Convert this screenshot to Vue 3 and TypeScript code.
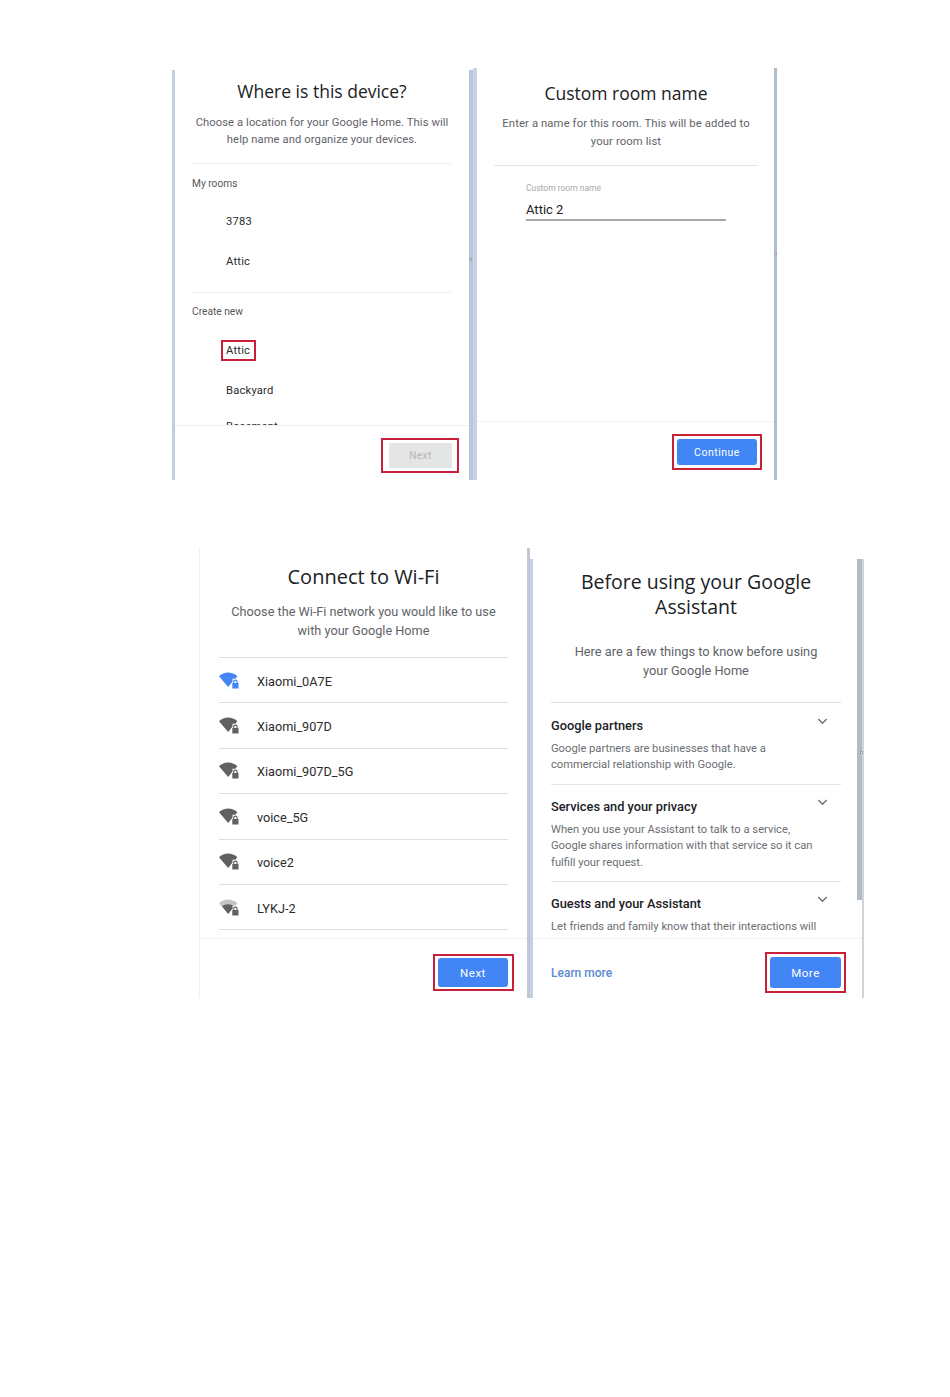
<template>
  <div class="page">
    <!-- first pair: room selection -->
    <div class="row row-rooms">
      <section class="panel panel-where">
        <header class="head">
          <h1>Where is this device?</h1>
          <p>Choose a location for your Google Home. This will<br />help name and organize your devices.</p>
        </header>
        <div class="body rooms">
          <div class="room-label">My rooms</div>
          <div v-for="r in myRooms" :key="r" class="room">{{ r }}</div>
          <div class="room-divider"></div>
          <div class="room-label second">Create new</div>
          <div v-for="r in newRooms" :key="r" class="room">
            <span :class="{ marked: r === 'Attic' }">{{ r }}</span>
          </div>
        </div>
        <footer class="foot">
          <div class="frame"><button type="button" class="btn off">Next</button></div>
        </footer>
        <i class="handle"></i>
      </section>

      <section class="panel panel-custom">
        <header class="head">
          <h1>Custom room name</h1>
          <p>Enter a name for this room. This will be added to<br />your room list</p>
        </header>
        <div class="body field-wrap">
          <label class="field-label">Custom room name</label>
          <div class="field-value">Attic 2</div>
        </div>
        <footer class="foot">
          <div class="frame"><button type="button" class="btn">Continue</button></div>
        </footer>
        <i class="handle"></i>
      </section>
    </div>

    <!-- second pair: wifi and assistant -->
    <div class="row row-setup">
      <section class="panel panel-wifi">
        <header class="head">
          <h1>Connect to Wi-Fi</h1>
          <p>Choose the Wi-Fi network you would like to use<br />with your Google Home</p>
        </header>
        <ul class="body networks">
          <li v-for="n in networks" :key="n.name" class="network">
            <svg class="wifi" viewBox="0 0 20 17" width="20" height="17">
              <path :fill="n.weak ? '#c4c4c4' : n.color" d="M0 4.2C2.6 1.8 6 .6 9.2.6s6.600 1.200 9.200 3.600L16.300 6.800H13.500V9.500L9.200 15z" />
              <path v-if="n.weak" :fill="n.color" d="M3 7.200C4.700 5.900 6.900 5.200 9.200 5.200c1.600 0 3 .3 4.300 1V9.500L9.200 15z" />
              <path :fill="n.color" d="M13.300 11h.8V9.800a2.300 2.300 0 0 1 4.600 0V11h.8v5.600h-6.200zM15.300 11h2.200V9.800a1.100 1.100 0 0 0-2.200 0z" />
            </svg>
            <span>{{ n.name }}</span>
          </li>
        </ul>
        <footer class="foot">
          <div class="frame"><button type="button" class="btn">Next</button></div>
        </footer>
      </section>

      <section class="panel panel-assistant">
        <header class="head">
          <h1>Before using your Google<br />Assistant</h1>
          <p>Here are a few things to know before using<br />your Google Home</p>
        </header>
        <div class="body topics">
          <article v-for="t in topics" :key="t.title" class="topic">
            <div class="topic-head">
              <h2>{{ t.title }}</h2>
              <svg class="chev" viewBox="0 0 12 8" width="11" height="7">
                <path d="M1.200 1.200 6 6l4.800-4.800" fill="none" stroke="#6f6f6f" stroke-width="1.600" />
              </svg>
            </div>
            <p v-html="t.text"></p>
          </article>
        </div>
        <footer class="foot">
          <a class="learn">Learn more</a>
          <div class="frame"><button type="button" class="btn">More</button></div>
        </footer>
        <i class="scrollbar"></i>
        <i class="handle"></i>
      </section>
    </div>
  </div>
</template>

<script setup lang="ts">
interface Network {
  name: string
  color: string
  weak?: boolean
}

const myRooms = ['3783', 'Attic']
const newRooms = ['Attic', 'Backyard', 'Basement']

const networks: Network[] = [
  { name: 'Xiaomi_0A7E', color: '#4285f4' },
  { name: 'Xiaomi_907D', color: '#616161' },
  { name: 'Xiaomi_907D_5G', color: '#616161' },
  { name: 'voice_5G', color: '#616161' },
  { name: 'voice2', color: '#616161' },
  { name: 'LYKJ-2', color: '#616161', weak: true }
]

const topics = [
  {
    title: 'Google partners',
    text: 'Google partners are businesses that have a<br>commercial relationship with Google.'
  },
  {
    title: 'Services and your privacy',
    text: 'When you use your Assistant to talk to a service,<br>Google shares information with that service so it can<br>fulfill your request.'
  },
  {
    title: 'Guests and your Assistant',
    text: 'Let friends and family know that their interactions will<br>be saved to your Google Account and used to help the'
  }
]
</script>

<style>
html, body { background: #fff; }
</style>

<style scoped>
.page {
  height: 1397px;
  padding-top: 68px;
  box-sizing: border-box;
  font-family: Roboto, "Liberation Sans", sans-serif;
  color: #202124;
  overflow: hidden;
}

.row { display: flex; align-items: flex-end; }
.row-rooms { height: 412px; padding-left: 172px; }
.row-setup { height: 450px; margin-top: 68px; padding-left: 199px; }

.panel {
  position: relative;
  display: flex;
  flex-direction: column;
  box-sizing: border-box;
  flex-shrink: 0;
  background: #fff;
}

.head { text-align: center; flex-shrink: 0; }
.head h1 { margin: 0; font-family: "Open Sans", sans-serif; font-weight: 400; }
.head p { margin: 0; color: #5f6368; }

.body { flex: 1; min-height: 0; overflow: hidden; margin: 0; padding: 0; list-style: none; }

.foot {
  display: flex;
  justify-content: flex-end;
  align-items: flex-start;
  flex-shrink: 0;
  border-top: 1px solid #f1f1f1;
  box-sizing: border-box;
}

.frame { border: 2px solid #c8203a; box-sizing: border-box; }

.btn {
  display: block;
  width: 100%;
  height: 100%;
  border: none;
  border-radius: 3px;
  padding: 0;
  background: #4285f4;
  color: #fff;
  font-family: inherit;
  font-weight: 400;
}
.btn.off { background: #e4e5e5; color: #b4b6b6; border-radius: 1px; }

.handle {
  position: absolute;
  width: 3px;
  height: 3px;
  border: 1px solid #9aa3ad;
  background: #fff;
  box-sizing: border-box;
}

/* where is this device */
.panel-where {
  width: 301px;
  height: 410px;
  border-left: 3px solid #c3cde0;
  border-right: 4px solid #bcc6da;
}
.panel-where .head { margin: 9px 17px 0; padding-bottom: 15px; border-bottom: 1px solid #efefef; }
.panel-where .head h1 { font-size: 17.5px; line-height: 24px; }
.panel-where .head p { margin-top: 11px; font-size: 11.2px; line-height: 17px; letter-spacing: .1px; }

.rooms { padding: 13px 17px 0; }
.room-label { font-size: 10.200px; line-height: 14px; color: #55585c; margin-bottom: 10px; }
.room-label.second { margin-bottom: 11px; }
.room {
  height: 40px;
  box-sizing: border-box;
  padding: 1px 0 0 34px;
  line-height: 40px;
  font-size: 11.200px;
  color: #2b2b2b;
  letter-spacing: .2px;
}
.room:last-child { margin-top: -4px; }
.room-divider { height: 1px; background: #efefef; margin: 11px 0 12px; }
.marked { display: inline-block; margin-left: -5px; line-height: 17px; padding: 0 4px 0 3px; border: 2px solid #c8203a; }

.panel-where .foot { height: 55px; padding: 12px 10px 0 0; }
.panel-where .frame { width: 78px; height: 35px; padding: 3px 5px 3px 6px; }
.panel-where .btn { font-size: 10px; letter-spacing: .5px; }
.panel-where .handle { right: -3px; top: 188px; }

/* custom room name */
.panel-custom {
  width: 304px;
  height: 412px;
  border-left: 4px solid #c8d2e4;
  border-right: 3px solid #b3bccb;
}
.panel-custom .head { margin: 13px 16px 0 17px; padding-bottom: 15px; border-bottom: 1px solid #e4e4e4; }
.panel-custom .head h1 { font-size: 17.500px; line-height: 24px; }
.panel-custom .head p { margin-top: 10px; font-size: 11.300px; line-height: 17.500px; letter-spacing: .1px; }

.field-wrap { padding: 16px 0 0 49px; }
.field-label { display: block; font-size: 8.500px; line-height: 12px; color: #a9a9a9; }
.field-value {
  width: 200px;
  margin-top: 7px;
  font-size: 13px;
  line-height: 18px;
  border-bottom: 2px solid #a8a8a8;
}

.panel-custom .foot { height: 59px; padding: 12px 12px 0 0; }
.panel-custom .frame { width: 90px; height: 36px; padding: 3px; }
.panel-custom .btn { font-size: 10.500px; letter-spacing: .5px; }
.panel-custom .handle { right: -3px; top: 184px; }

/* wifi */
.panel-wifi {
  width: 331px;
  height: 450px;
  border-left: 1px solid #f0f0f0;
  border-right: 3px solid #bfc7d4;
}
.panel-wifi .head { margin: 0 19px; padding: 16px 0 17px; border-bottom: 1px solid #dedede; }
.panel-wifi .head h1 { font-size: 20px; line-height: 26px; }
.panel-wifi .head p { margin-top: 12px; font-size: 12.700px; line-height: 19px; }

.networks { padding: 0 19px; }
.network {
  display: flex;
  align-items: center;
  gap: 18px;
  height: 45.400px;
  box-sizing: border-box;
  border-bottom: 1px solid #dedede;
  font-size: 12.700px;
  color: #2b2b2b;
}
.network span { padding-top: 2px; }
.wifi { flex-shrink: 0; }

.panel-wifi .foot { height: 60px; padding: 15px 13px 0 0; }
.panel-wifi .frame { width: 81px; height: 37px; padding: 2px 4px 2px 3px; }
.panel-wifi .btn { font-size: 11.500px; letter-spacing: .5px; }

/* assistant */
.panel-assistant {
  width: 334px;
  height: 439px;
  border-left: 3px solid #c6d1e3;
  border-right: 2px solid #cfd4dd;
}
.panel-assistant .head { margin: 0 21px 0 18px; padding: 10px 0 22px; border-bottom: 1px solid #dedede; }
.panel-assistant .head h1 { font-size: 19.500px; line-height: 25px; }
.panel-assistant .head p { margin-top: 23px; font-size: 12.800px; line-height: 19px; }

.topics { padding: 0 21px 0 18px; }
.topic { border-bottom: 1px solid #e4e4e4; padding: 13.500px 0 10.500px; }
.topic:last-child { border-bottom: none; padding-top: 12.500px; }
.topic-head { display: flex; justify-content: space-between; align-items: flex-start; }
.topic-head h2 { margin: 0; font-size: 12.800px; line-height: 17px; font-weight: 500; color: #202124; }
.chev { margin: 1px 13px 0 0; }
.topic p { margin: 7px 0 0; font-size: 11.200px; line-height: 16.300px; color: #6b6e72; }

.panel-assistant .foot { height: 60px; justify-content: space-between; padding: 13px 16px 0 18px; }
.learn { margin-top: 14px; font-size: 12px; line-height: 14px; font-weight: 500; color: #5a8bd0; }
.panel-assistant .frame { width: 81px; height: 41px; padding: 3px; }
.panel-assistant .btn { font-size: 11.500px; letter-spacing: .5px; }

.scrollbar {
  position: absolute;
  top: 0;
  right: 0;
  width: 5px;
  height: 341px;
  background: #b4bac6;
}
.panel-assistant .handle { right: -1px; top: 192px; }
</style>
